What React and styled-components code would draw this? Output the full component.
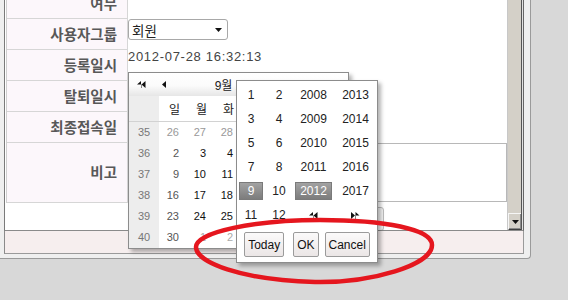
// 회원 정보 상세 화면 + 달력/연월 선택 팝업 (빨간 동그라미 표시)
import React from "react";
import styled, { createGlobalStyle } from "styled-components";

const GlobalStyle = createGlobalStyle`
  html, body { margin: 0; padding: 0; }
  body {
    background: #d8d8d8;
    font-family: "Liberation Sans", "Noto Sans CJK KR", sans-serif;
  }
`;

const Page = styled.div`
  position: relative;
  width: 568px;
  height: 300px;
  overflow: hidden;
`;

const Dialog = styled.div`
  box-sizing: border-box;
  width: 531px;
  height: 259px;
  padding: 0 6px 4px 4px;
  background: #efefef;
  border-right: 1px solid #9a9a9a;
  border-bottom: 1px solid #9a9a9a;
  border-bottom-right-radius: 4px;
  display: flex;
  flex-direction: column;
`;

const Frame = styled.div`
  box-sizing: border-box;
  height: 231px;
  display: flex;
  background: #e2e2e2;
  border-left: 1px solid #7a7a7a;
  border-right: 1px solid #666;
  border-bottom: 1px solid #8a8a8a;
`;

const Content = styled.div`
  flex: 1;
  overflow: hidden;
  background: #fff;
  padding-left: 1px;
  border-right: 1px solid #c8c8c8;
`;

const Scrollbar = styled.div`
  box-sizing: border-box;
  width: 14px;
  margin-right: 1px;
  background: #d4d0c8;
  border-right: 1px solid #555;
  display: flex;
  flex-direction: column;
  justify-content: flex-end;
`;

const ArrowButton = styled.div`
  box-sizing: border-box;
  height: 17px;
  display: flex;
  align-items: center;
  justify-content: center;
  background: #d4d0c8;
  border-top: 1px solid #f6f6f6;
  border-left: 1px solid #f6f6f6;
  border-bottom: 1px solid #404040;
  box-shadow: inset -1px -1px 0 #8a8a8a;
`;

const Footer = styled.div`
  box-sizing: border-box;
  height: 23px;
  background: #f6eeee;
  border-left: 1px solid #8a8a8a;
  border-right: 1px solid #9a9a9a;
  border-bottom: 1px solid #9a9a9a;
`;

const Form = styled.div`
  margin-top: -12px;
  border-left: 1px solid #cfcfcf;
`;

const Row = styled.div`
  display: grid;
  grid-template-columns: 121px 1fr;
  height: ${(p) => p.$h || 31}px;
`;

const Label = styled.div`
  box-sizing: border-box;
  display: flex;
  align-items: center;
  justify-content: flex-end;
  padding: 0 10px 2px 0;
  background: #fcf7fb;
  border-right: 1px solid #d6d6d6;
  border-bottom: 1px solid #d6d6d6;
  font-family: "Noto Sans CJK KR", sans-serif;
  font-size: 14.5px;
  font-weight: bold;
  color: #585858;
`;

const Value = styled.div`
  display: flex;
  align-items: flex-start;
  min-width: 0;
`;

const Select = styled.div`
  box-sizing: border-box;
  width: 100px;
  height: 21px;
  display: flex;
  align-items: center;
  justify-content: space-between;
  padding: 0 5px 0 3px;
  border: 1px solid #a8a8a8;
  border-radius: 3px;
  background: #fff;
  font-family: "Noto Sans CJK KR", sans-serif;
  font-size: 13.5px;
  color: #222;
`;

const DateText = styled.div`
  font-size: 13px;
  line-height: 14px;
  letter-spacing: 0.7px;
  color: #444;
`;

const Memo = styled.div`
  box-sizing: border-box;
  width: 100%;
  height: 59px;
  border: 1px solid #b8b8b8;
`;

const ButtonRow = styled.div`
  display: flex;
  justify-content: center;
  gap: 7px;
  padding-top: 4px;
`;

const FormButton = styled.div`
  box-sizing: border-box;
  width: 80px;
  height: 24px;
  border: 1px solid #bcbcbc;
  border-radius: 3px;
  background: #f4f4f4;
`;

/* 달력 팝업 */
const Calendar = styled.div`
  position: absolute;
  left: 128px;
  top: 72px;
  box-sizing: border-box;
  width: 221px;
  height: 177px;
  background: #fff;
  border: 1px solid #8c8c8c;
  box-shadow: 3px 3px 4px rgba(0, 0, 0, 0.3);
  font-size: 11px;
`;

const CalHeader = styled.div`
  height: 23px;
  display: flex;
  align-items: center;
  gap: 16px;
  padding: 0 8px;
  background: linear-gradient(#fff 0%, #fbfbfb 55%, #e6e6e6 100%);
`;

const CalTitle = styled.div`
  flex: 1;
  text-align: center;
  font-size: 12px;
  color: #222;
`;

const CalGrid = styled.div`
  display: grid;
  grid-template-columns: 30px repeat(7, 27px);
  grid-auto-rows: 21px;
  line-height: 21px;
`;

const HeadGrid = styled(CalGrid)`
  grid-auto-rows: 25px;
  line-height: 25px;
  border-bottom: 1px solid #d2d2d2;
`;

const WeekCell = styled.div`
  background: #ededed;
  color: #777;
  text-align: center;
`;

const DayCell = styled.div`
  text-align: right;
  padding-right: 7px;
  color: ${(p) => p.$tone};
`;

const DayName = styled(DayCell)`
  font-family: "Noto Sans CJK KR", sans-serif;
  font-size: 12px;
  padding-right: 6px;
`;

/* 연/월 선택 팝업 */
const Picker = styled.div`
  position: absolute;
  left: 236px;
  top: 80px;
  box-sizing: border-box;
  width: 142px;
  height: 183px;
  padding-top: 2px;
  background: #fff;
  border: 1px solid #8c8c8c;
  box-shadow: 3px 3px 4px rgba(0, 0, 0, 0.3);
`;

const PickGrid = styled.div`
  display: grid;
  grid-template-columns: 28px 28px 41px 43px;
  grid-auto-rows: 24px;
`;

const PickCell = styled.div`
  display: flex;
  padding: 3px 2px;
`;

const PickItem = styled.div`
  flex: 1;
  display: flex;
  align-items: center;
  justify-content: center;
  font-size: 12px;
  color: ${(p) => (p.$on ? "#fff" : "#222")};
  background: ${(p) => (p.$on ? "linear-gradient(#a2a2a2, #7c7c7c)" : "none")};
  border: 1px solid ${(p) => (p.$on ? "#7a7a7a" : "transparent")};
`;

const ButtonBar = styled.div`
  display: flex;
  justify-content: center;
  gap: 6px;
  margin-top: 5px;
`;

const PickButton = styled.div`
  box-sizing: border-box;
  height: 25px;
  padding: 0 3px;
  display: flex;
  align-items: center;
  border: 1px solid #9b9b9b;
  border-radius: 2px;
  background: linear-gradient(#fbfafa, #ebe6e6);
  font-size: 12px;
  color: #111;
  margin-right: ${(p) => (p.$sep ? 3 : 0)}px;
`;

const Annotation = styled.svg`
  position: absolute;
  left: 0;
  top: 0;
  pointer-events: none;
`;

const Tri = ({ dir = "down", w = 7, h = 4 }) => {
  const pts = {
    down: "0,0 7,0 3.5,4",
    left: "0,3.5 4,0 4,7",
    right: "4,3.5 0,0 0,7",
  }[dir];
  const vb = dir === "down" ? "0 0 7 4" : "0 0 4 7";
  return (
    <svg width={w} height={h} viewBox={vb}>
      <polygon points={pts} fill="#111" />
    </svg>
  );
};

const Double = ({ dir }) => (
  <svg width="9" height="7" viewBox="0 0 9 7">
    {dir === "left" ? (
      <polygon points="0,3.5 4,0 4,7 4.5,7 4.5,3.5 8.5,0 8.5,7 4.5,3.5 4,3.5" fill="#111" />
    ) : (
      <polygon points="8.5,3.5 4.5,0 4.5,7 4,7 4,3.5 0,0 0,7 4,3.5 4.5,3.5" fill="#111" />
    )}
  </svg>
);

const weeks = [
  [35, [26, 27, 28, 29, 30, 31, 1], 6],
  [36, [2, 3, 4, 5, 6, 7, 8], 0],
  [37, [9, 10, 11, 12, 13, 14, 15], 0],
  [38, [16, 17, 18, 19, 20, 21, 22], 0],
  [39, [23, 24, 25, 26, 27, 28, 29], 0],
  [40, [30, 1, 2, 3, 4, 5, 6], -1],
];

const dayTone = (wi, di, week) => {
  const [, , lead] = week;
  if (wi === 0 && di < lead) return "#999";
  if (wi === 5 && di > 0) return "#aaa";
  return di === 0 ? "#555" : "#111";
};

const pickRows = [
  ["1", "2", "2008", "2013"],
  ["3", "4", "2009", "2014"],
  ["5", "6", "2010", "2015"],
  ["7", "8", "2011", "2016"],
  ["9", "10", "2012", "2017"],
  ["11", "12", "<<", ">>"],
];

function App() {
  return (
    <Page>
      <GlobalStyle />
      <Dialog>
        <Frame>
          <Content>
            <Form>
              <Row>
                <Label>여부</Label>
                <Value />
              </Row>
              <Row>
                <Label>사용자그룹</Label>
                <Value>
                  <Select>
                    <span>회원</span>
                    <Tri dir="down" />
                  </Select>
                </Value>
              </Row>
              <Row>
                <Label>등록일시</Label>
                <Value>
                  <DateText>2012-07-28 16:32:13</DateText>
                </Value>
              </Row>
              <Row>
                <Label>탈퇴일시</Label>
                <Value />
              </Row>
              <Row>
                <Label>최종접속일</Label>
                <Value />
              </Row>
              <Row $h={60}>
                <Label>비고</Label>
                <Value>
                  <Memo />
                </Value>
              </Row>
            </Form>
            <ButtonRow>
              <FormButton />
              <FormButton />
              <FormButton />
            </ButtonRow>
          </Content>
          <Scrollbar>
            <ArrowButton>
              <Tri dir="down" />
            </ArrowButton>
          </Scrollbar>
        </Frame>
        <Footer />
      </Dialog>

      <Calendar>
        <CalHeader>
          <Double dir="left" />
          <Tri dir="left" w={4} h={7} />
          <CalTitle>9월 2012</CalTitle>
          <Tri dir="right" w={4} h={7} />
          <Double dir="right" />
        </CalHeader>
        <HeadGrid>
          <WeekCell />
          {["일", "월", "화", "수", "목", "금", "토"].map((d) => (
            <DayName key={d} $tone="#222">
              {d}
            </DayName>
          ))}
        </HeadGrid>
        <CalGrid>
          {weeks.map((week, wi) => (
            <React.Fragment key={week[0]}>
              <WeekCell>{week[0]}</WeekCell>
              {week[1].map((d, di) => (
                <DayCell key={di} $tone={dayTone(wi, di, week)}>
                  {d}
                </DayCell>
              ))}
            </React.Fragment>
          ))}
        </CalGrid>
      </Calendar>

      <Picker>
        <PickGrid>
          {pickRows.map((row) =>
            row.map((v) => (
              <PickCell key={v}>
                <PickItem $on={v === "9" || v === "2012"}>
                  {v === "<<" ? <Double dir="left" /> : v === ">>" ? <Double dir="right" /> : v}
                </PickItem>
              </PickCell>
            ))
          )}
        </PickGrid>
        <ButtonBar>
          <PickButton $sep>Today</PickButton>
          <PickButton>OK</PickButton>
          <PickButton>Cancel</PickButton>
        </ButtonBar>
      </Picker>

      <Annotation width="568" height="300" viewBox="0 0 568 300">
        <path
          d="M432 245 C432 229 385 220 320 220 C255 220 196 232 196 247 C196 262 240 280 315 282 C372 283 432 265 432 245 Z"
          fill="none"
          stroke="#e5161e"
          strokeWidth="4.5"
          strokeLinejoin="round"
        />
      </Annotation>
    </Page>
  );
}

export default App;
